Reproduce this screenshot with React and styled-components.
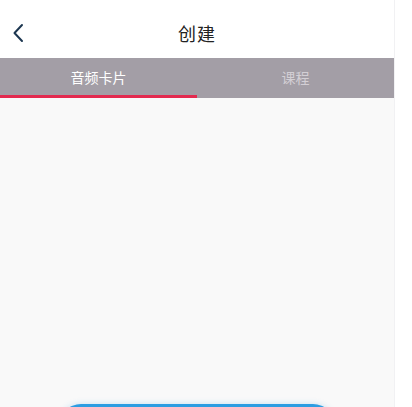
import React, { useState } from 'react';
import styled, { createGlobalStyle } from 'styled-components';

const GlobalStyle = createGlobalStyle`
    html, body {
        margin: 0;
        padding: 0;
        background: #ffffff;
        font-family: "Noto Sans CJK SC", "Noto Sans", sans-serif;
    }
`;

const Page = styled.div`
    width: 394px;
    height: 407px;
    overflow: hidden;
    display: flex;
    flex-direction: column;
    border-right: 1px solid #f1f1f3;
    box-sizing: content-box;
`;

const Header = styled.div`
    height: 58px;
    flex-shrink: 0;
    padding-top: 8px;
    box-sizing: border-box;
    display: flex;
    align-items: center;
    justify-content: center;
    position: relative;
    background: #ffffff;
`;

const BackButton = styled.button`
    position: absolute;
    left: 3px;
    top: 18px;
    width: 30px;
    height: 30px;
    padding: 0;
    border: none;
    background: transparent;
    display: flex;
    align-items: center;
    justify-content: center;
`;

const Title = styled.h1`
    margin: 0;
    font-size: 18px;
    font-weight: 400;
    color: #222222;
    letter-spacing: 1px;
`;

const TabBar = styled.div`
    height: 40px;
    flex-shrink: 0;
    display: flex;
    background: #a39ea6;
`;

const Tab = styled.div`
    flex: 1;
    display: flex;
    align-items: center;
    justify-content: center;
    position: relative;
    font-size: 14px;
    color: ${p => (p.$active ? '#ffffff' : '#d3cfd5')};
    padding-bottom: 2px;
    box-sizing: border-box;
    &::after {
        content: '';
        position: absolute;
        left: 0;
        right: 0;
        bottom: 0;
        height: 3px;
        background: ${p => (p.$active ? '#e32a4f' : 'transparent')};
    }
`;

const Body = styled.div`
    flex-shrink: 0;
    background: #f9f9f9;
    display: flex;
    flex-direction: column;
    align-items: center;
    padding-top: 306px;
`;

// only the top edge of this button is on screen
const CreateButton = styled.button`
    width: 276px;
    height: 44px;
    flex-shrink: 0;
    border: none;
    border-radius: 22px;
    background: #2c9de2;
    box-shadow: 0 0 6px rgba(44, 157, 226, 0.25);
`;

const tabs = ['音频卡片', '课程'];

const App = () => {
    const [active, setActive] = useState(0);

    return (
        <>
            <GlobalStyle />
            <Page>
                <Header>
                    <BackButton>
                        <svg width="12" height="20" viewBox="0 0 12 20">
                            <path d="M10 2 L2.5 10 L10 18" fill="none" stroke="#1c3650" strokeWidth="2" strokeLinecap="round" strokeLinejoin="round" />
                        </svg>
                    </BackButton>
                    <Title>创建</Title>
                </Header>
                <TabBar>
                    {tabs.map((t, i) => (
                        <Tab key={t} $active={i === active} onClick={() => setActive(i)}>
                            {t}
                        </Tab>
                    ))}
                </TabBar>
                <Body>
                    <CreateButton aria-label="创建" />
                </Body>
            </Page>
        </>
    );
};

export default App;
